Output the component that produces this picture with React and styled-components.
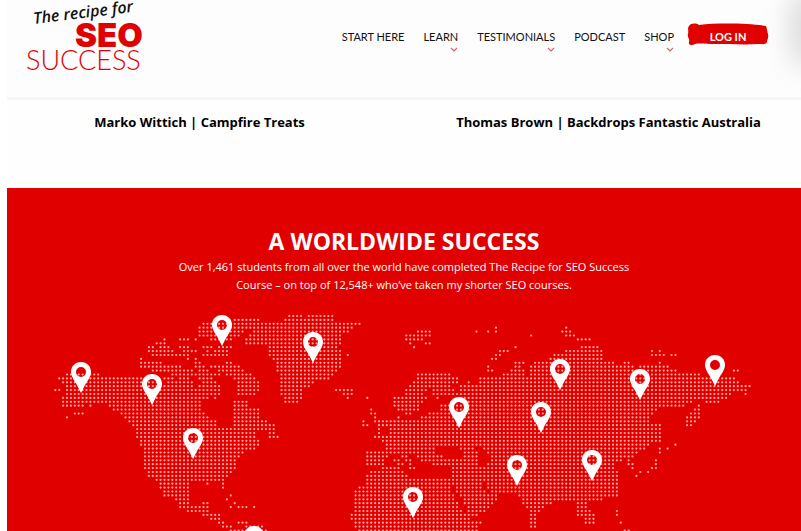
import React from "react";
import styled, { createGlobalStyle, css } from "styled-components";

const GlobalStyle = createGlobalStyle`
  * {
    box-sizing: border-box;
  }
  body {
    margin: 0;
    background: #ffffff;
    font-family: "Open Sans", "Noto Sans", sans-serif;
    overflow-x: hidden;
  }
`;

const Page = styled.div`
  padding-left: 7px;
`;

const Header = styled.header`
  position: relative;
  display: flex;
  justify-content: space-between;
  align-items: flex-start;
  height: 100px;
  padding: 0 32px 0 18px;
  background: #fdfdfd;
  border-bottom: 3px solid #f6f6f6;
  overflow: hidden;
  &::after {
    content: "";
    position: absolute;
    top: 0;
    right: -14px;
    width: 12px;
    height: 56px;
    box-shadow: 0 0 32px 6px rgba(0, 0, 0, 0.22);
  }
`;

const LogoLink = styled.a`
  display: block;
  svg {
    display: block;
  }
`;

const Nav = styled.nav`
  display: flex;
  align-items: center;
  gap: 19px;
  margin-top: 22px;
`;

const navText = css`
  font-family: Lato, "Open Sans", sans-serif;
  font-size: 11px;
  line-height: 16px;
  text-decoration: none;
  white-space: nowrap;
`;

const NavLink = styled.a`
  ${navText}
  position: relative;
  margin-top: 5px;
  color: #111111;
  svg {
    position: absolute;
    right: 0;
    bottom: -7px;
  }
`;

const LoginLink = styled.a`
  ${navText}
  position: relative;
  display: flex;
  justify-content: center;
  width: 82px;
  margin-left: -6px;
  padding: 7px 0 2px;
  color: #ffffff;
  font-weight: 700;
  svg {
    position: absolute;
    inset: 0;
    width: 100%;
    height: 100%;
  }
  span {
    position: relative;
  }
`;

const Testimonials = styled.section`
  display: grid;
  grid-template-columns: 1fr 1fr;
  column-gap: 24px;
  height: 88px;
  padding-top: 12px;
  background: #fefefe;
`;

const Person = styled.h3`
  margin: 0;
  font-size: 13px;
  line-height: 20px;
  font-weight: 700;
  text-align: center;
  color: #000000;
`;

const Worldwide = styled.section`
  background: #e10000;
  color: #ffffff;
  text-align: center;
  padding-top: 37px;
`;

const Title = styled.h2`
  margin: 0;
  font-size: 23px;
  line-height: 33px;
  font-weight: 700;
`;

const Description = styled.p`
  max-width: 480px;
  margin: 0 auto;
  padding-bottom: 6px;
  font-size: 11px;
  line-height: 18px;
  font-weight: 400;
`;

const MapSvg = styled.svg`
  display: block;
  width: 100%;
  height: auto;
`;

const STEP = 3.9;
const ORIGIN = [55.3, 316];

const LAND = [
  // north america
  [[57,375],[66,375],[66,371],[99,371],[99,375],[173,375],[176,380],[192,380],[196,387],[206,387],[206,398],[202,402],[201,408],[208,417],[216,421],[221,428],[231,428],[233,420],[231,400],[247,401],[249,408],[259,409],[262,420],[271,422],[275,431],[256,433],[256,438],[262,440],[256,450],[244,452],[239,459],[236,466],[232,474],[224,479],[222,483],[190,483],[191,505],[188,509],[177,507],[176,500],[164,496],[158,484],[146,474],[143,463],[142,448],[134,434],[133,425],[124,419],[116,412],[108,406],[95,403],[84,404],[84,408],[62,408],[62,396],[66,394],[66,383],[57,382]],
  // central and south america
  [[178,506],[193,506],[203,502],[211,502],[210,512],[220,513],[221,521],[238,528],[262,523],[268,531],[228,531],[212,520],[202,512],[187,512]],
  // ellesmere and greenland
  [[232,318],[262,318],[262,321],[283,321],[283,318],[294,314],[304,314],[304,318],[310,314],[332,314],[336,321],[344,322],[344,332],[340,336],[343,341],[338,348],[342,354],[340,370],[333,378],[316,380],[310,386],[303,390],[301,399],[297,404],[287,404],[280,396],[279,376],[275,363],[268,354],[268,346],[246,346],[246,338],[252,334],[254,326],[240,334],[238,338],[226,341],[222,344],[210,341],[206,337],[196,336],[196,330],[203,322],[232,322]],
  // baffin and nearby
  [[212,364],[233,362],[244,370],[252,374],[262,385],[256,397],[236,395],[238,384],[230,376],[216,371]],
  [[138,361],[156,361],[174,365],[195,369],[197,374],[178,376],[160,373],[138,367]],
  // eurasia
  [[380,417],[392,421],[404,418],[418,418],[428,413],[436,413],[441,403],[460,402],[460,397],[438,398],[428,396],[424,400],[420,404],[420,412],[408,414],[401,412],[394,407],[394,397],[404,396],[406,387],[414,379],[420,371],[444,371],[458,378],[460,386],[468,384],[478,383],[480,378],[494,378],[502,374],[512,374],[514,362],[523,362],[524,378],[528,365],[540,361],[550,360],[551,353],[564,352],[570,348],[580,347],[580,345],[600,345],[604,352],[604,360],[612,362],[617,365],[624,361],[631,361],[635,367],[652,366],[660,361],[668,365],[672,370],[696,373],[708,376],[728,376],[738,380],[742,383],[753,384],[752,387],[740,388],[729,395],[724,400],[700,401],[690,402],[682,408],[660,408],[653,412],[650,424],[660,425],[660,441],[648,446],[646,451],[638,453],[632,459],[620,461],[614,465],[618,473],[619,489],[614,495],[603,500],[589,501],[588,506],[595,514],[594,524],[586,524],[582,512],[575,506],[575,501],[566,503],[561,498],[550,504],[541,511],[537,518],[537,527],[531,527],[527,509],[517,495],[500,494],[494,505],[482,513],[469,520],[481,520],[480,531],[356,531],[355,523],[348,520],[348,514],[352,512],[352,496],[356,487],[364,484],[364,476],[372,471],[384,467],[402,467],[404,475],[420,479],[451,479],[451,468],[436,467],[430,460],[426,464],[420,463],[416,454],[408,453],[414,464],[408,465],[398,454],[388,454],[385,463],[380,466],[368,466],[364,463],[364,452],[384,451],[384,446],[378,437],[377,433],[386,431]],
  // kamchatka
  [[696,405],[699,405],[699,421],[691,427],[687,427],[687,417]],
];

const WATER = [
  [[437,446],[452,445],[463,451],[463,457],[444,457],[437,454]],
  [[476,446],[484,445],[482,451],[489,453],[488,466],[479,467],[477,456]],
  [[449,486],[453,484],[468,513],[462,513]],
  [[480,482],[484,482],[491,492],[486,494]],
  [[422,394],[431,386],[434,389],[428,397]],
  [[450,386],[458,386],[461,390],[454,391]],
  [[150,377],[152,375],[158,375],[164,381],[170,384],[164,386],[158,382]],
  [[526,363],[529,363],[530,378],[525,378]],
  [[384,428],[391,428],[386,434],[380,436]],
];

// short runs of dots: y, first x, last x
const RUNS = [
  [389,55,59],[397,63,63],[412,78,82],[415,75,75],[415,82,82],[419,67,67],[407,90,90],
  [339,166,166],[339,181,186],[339,194,194],[343,158,166],[347,147,153],[347,162,170],[347,181,188],
  [351,150,172],[351,184,196],[354,154,175],[354,182,186],[354,204,225],[347,204,210],[347,218,229],
  [351,208,208],[351,214,226],[358,140,143],[358,187,187],[358,197,197],[362,194,194],[362,200,200],
  [366,194,204],[366,210,214],[370,198,206],[374,190,210],[374,215,220],[378,182,188],[378,200,210],
  [382,203,216],[386,200,219],[390,206,220],[393,209,220],[397,203,207],[397,214,214],
  [324,347,359],[327,343,350],[331,343,347],[354,346,346],[389,338,353],[393,342,353],[397,346,346],
  [438,269,278],[434,269,275],[426,270,272],
  [484,208,208],[484,223,223],[488,223,223],[496,231,231],[500,228,228],[504,235,235],[507,231,231],[507,239,247],[507,255,255],
  [515,203,203],[523,238,245],
  [411,373,373],[415,373,377],[419,376,377],[423,365,365],[423,377,381],[426,365,369],[426,380,381],[430,380,380],[438,377,381],
  [397,369,369],[419,399,399],[423,380,380],
  [331,418,431],[335,407,431],[339,407,423],[343,411,411],[343,427,431],[346,415,415],
  [331,476,476],[331,487,487],[327,495,495],[331,495,495],[335,533,533],[346,514,514],
  [350,499,507],[354,495,499],[358,491,495],[366,488,488],[370,487,491],[362,522,522],[366,515,519],[370,513,522],[374,505,522],[381,468,468],
  [327,568,568],[331,564,572],[335,568,575],[339,578,588],[339,582,586],
  [350,652,652],[350,660,660],[354,652,664],[354,670,676],[370,732,736],[393,747,747],[389,739,747],[403,705,717],
  [446,674,674],[450,667,667],[450,660,660],[453,660,660],[457,628,632],[461,628,628],[465,628,632],[469,632,632],
  [461,655,655],[465,655,655],[469,651,655],[473,640,640],[473,648,648],[477,637,637],
  [496,618,618],[511,618,618],[515,618,618],[523,621,621],[530,624,629],
  [461,395,397],[465,399,403],[469,411,415],[511,578,578],[515,578,590],
];

const PINS = [
  [81, 362], [152, 374], [222, 315], [313, 332], [193, 428], [413, 487], [459, 397],
  [541, 402], [560, 359], [517, 455], [592, 450], [640, 369], [715, 355], [254, 526],
];

const inside = (x, y, shape) => {
  let hit = false;
  for (let i = 0, j = shape.length - 1; i < shape.length; j = i++) {
    const [xi, yi] = shape[i];
    const [xj, yj] = shape[j];
    if (yi > y !== yj > y && x < ((xj - xi) * (y - yi)) / (yj - yi) + xi) {
      hit = !hit;
    }
  }
  return hit;
};

const buildDots = () => {
  const dots = new Set();
  for (let row = 0; row < 56; row++) {
    for (let col = 0; col < 181; col++) {
      const x = ORIGIN[0] + col * STEP;
      const y = ORIGIN[1] + row * STEP;
      if (LAND.some(s => inside(x, y, s)) && !WATER.some(s => inside(x, y, s))) {
        dots.add(`${col},${row}`);
      }
    }
  }
  RUNS.forEach(([y, from, to]) => {
    const row = Math.round((y - ORIGIN[1]) / STEP);
    const last = Math.round((to - ORIGIN[0]) / STEP);
    for (let col = Math.round((from - ORIGIN[0]) / STEP); col <= last; col++) {
      dots.add(`${col},${row}`);
    }
  });
  return [...dots]
    .map(key => {
      const [col, row] = key.split(",").map(Number);
      return `M${(ORIGIN[0] + col * STEP).toFixed(1)} ${(ORIGIN[1] + row * STEP).toFixed(1)}h.01`;
    })
    .join("");
};

const DOTS = buildDots();

const WorldMap = () => (
  <MapSvg viewBox="7 300 794 231" role="img" aria-label="Map of students around the world">
    <path d={DOTS} stroke="#ffa8a0" strokeWidth="2.2" strokeLinecap="round" />
    {PINS.map(([x, y]) => (
      <path
        key={`${x}-${y}`}
        transform={`translate(${x - 10} ${y})`}
        fill="#ffffff"
        fillRule="evenodd"
        d="M10 0C4 0 0 4.400 0 10C0 15 4 19 7 25L10 31L13 25C16 19 20 15 20 10C20 4.400 16 0 10 0ZM10 5A5 5 0 1 1 10 15A5 5 0 1 1 10 5Z"
      />
    ))}
  </MapSvg>
);

const Logo = () => (
  <svg width="124" height="80" viewBox="25 0 124 80" role="img" aria-label="The recipe for SEO Success">
    <text
      x="34"
      y="24"
      transform="rotate(-7 34 24)"
      fontFamily="Open Sans, sans-serif"
      fontSize="16"
      fontStyle="italic"
      fontWeight="600"
      fill="#111111"
    >
      The recipe for
    </text>
    <text x="75" y="47" fontFamily="Inter, sans-serif" fontSize="33" fontWeight="900" fill="#e10000">
      SEO
    </text>
    <text x="26" y="70" fontFamily="Lato, sans-serif" fontSize="27" fontWeight="300" fill="#e10000">
      SUCCESS
    </text>
  </svg>
);

const Chevron = () => (
  <svg width="8" height="5" viewBox="0 0 8 5" aria-hidden="true">
    <path d="M1 1L4 4L7 1" fill="none" stroke="#d9606c" strokeWidth="1.200" />
  </svg>
);

const LINKS = [
  { name: "START HERE" },
  { name: "LEARN", menu: true },
  { name: "TESTIMONIALS", menu: true },
  { name: "PODCAST" },
  { name: "SHOP", menu: true },
];

export default () => {
  return (
    <React.Fragment>
      <GlobalStyle />
      <Page>
        <Header>
          <LogoLink href="#">
            <Logo />
          </LogoLink>
          <Nav>
            {LINKS.map(link => (
              <NavLink key={link.name} href="#">
                {link.name}
                {link.menu && <Chevron />}
              </NavLink>
            ))}
            <LoginLink href="#">
              <svg viewBox="0 0 82 25" preserveAspectRatio="none" aria-hidden="true">
                <path
                  fill="#e10000"
                  d="M2 4C4 1 9 1 12 3C29 1 60 1 79 4C80 7 80 9 81 12C82 15 80 18 80 20C79 23 75 22 72 22C58 23 42 22 28 22C20 22 13 21 8 22C5 24 1 23 2 20C3 17 0 15 1 12C2 9 0 7 2 4Z"
                />
              </svg>
              <span>LOG IN</span>
            </LoginLink>
          </Nav>
        </Header>
        <Testimonials>
          <Person>Marko Wittich | Campfire Treats</Person>
          <Person>Thomas Brown | Backdrops Fantastic Australia</Person>
        </Testimonials>
        <Worldwide>
          <Title>A WORLDWIDE SUCCESS</Title>
          <Description>
            Over 1,461 students from all over the world have completed The Recipe for SEO Success
            Course – on top of 12,548+ who’ve taken my shorter SEO courses.
          </Description>
          <WorldMap />
        </Worldwide>
      </Page>
    </React.Fragment>
  );
};
